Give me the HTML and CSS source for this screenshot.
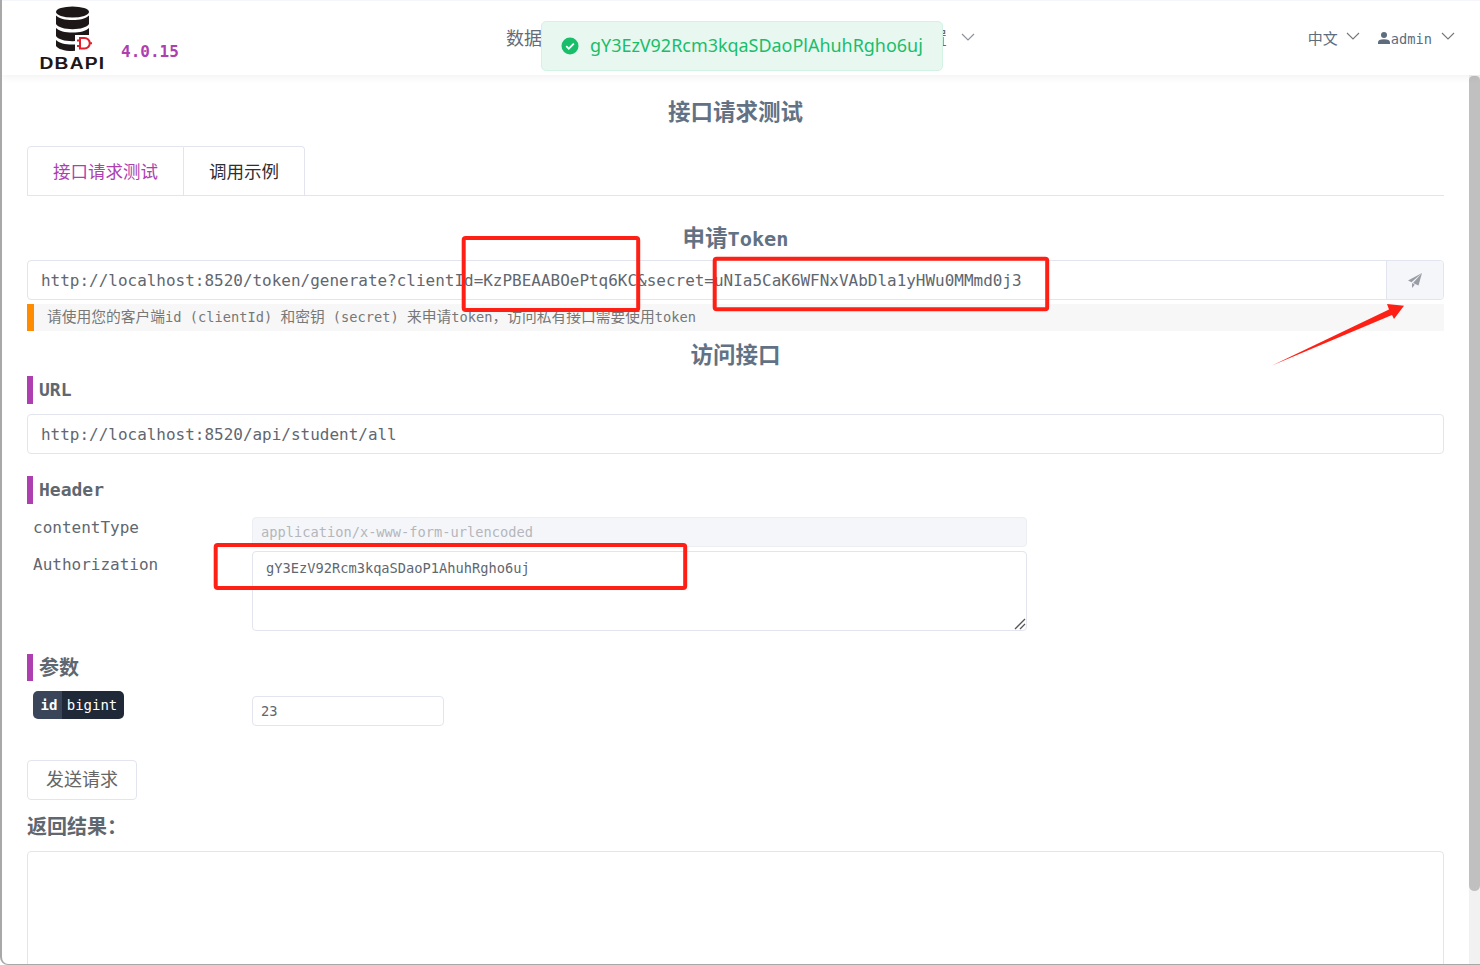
FILE: index.html
```html
<!DOCTYPE html>
<html lang="zh">
<head>
<meta charset="utf-8">
<title>DBAPI</title>
<link rel="stylesheet" href="styles.css">
</head>
<body>
<div class="window">
  <header class="topbar">
    <div class="logo">
      <svg class="logo-mark" width="38" height="46" viewBox="0 0 38 46">
        <ellipse cx="18.5" cy="6" rx="16.5" ry="5.5" fill="#1d1718"/>
        <path d="M2 9.5c3 3 9 4.6 16.5 4.6S32 12.500 35 9.500V18c-2 3.200-8.500 5.200-16.500 5.200S4 21.200 2 18z" fill="#1d1718"/>
        <path d="M2 22c3 3 9 4.600 16.500 4.600S32 25 35 22v8c-2 3.200-8.500 5.200-16.500 5.200S4 33.200 2 30z" fill="#1d1718"/>
        <path d="M2 34c3 3 9 4.600 16.500 4.600 2 0 4-.1 6-.4v6.300c-2 .3-4 .5-6 .5C10 45 4 43 2 40z" fill="#1d1718"/>
        <rect x="21" y="29" width="17" height="16" fill="#fff"/>
        <path d="M26 32h4.500a5.200 5.200 0 0 1 0 10.500H26zM23 34.500h3M23 40h3M35.500 37.200H38" fill="none" stroke="#e0202c" stroke-width="2"/>
      </svg>
      <span class="logo-text">DBAPI</span>
    </div>
    <span class="version">4.0.15</span>
    <nav class="nav">
      <span class="nav-item">数据源</span>
      <span class="nav-item">接口</span>
      <span class="nav-item">任务</span>
      <span class="nav-item">监控</span>
      <span class="nav-item">系统设置</span>
      <svg class="chev" width="14" height="8" viewBox="0 0 14 8"><path d="M1 1l6 6 6-6" fill="none" stroke="#8a8f98" stroke-width="1.100"/></svg>
    </nav>
    <div class="account">
      <span class="lang">中文</span>
      <svg class="chev" width="14" height="8" viewBox="0 0 14 8"><path d="M1 1l6 6 6-6" fill="none" stroke="#777" stroke-width="1.100"/></svg>
      <svg class="user-icon" width="12" height="12" viewBox="0 0 12 12"><circle cx="6" cy="3" r="3" fill="#5d6d7e"/><path d="M0 12V10.500C0 8.500 2 7.300 6 7.300s6 1.200 6 3.200V12z" fill="#5d6d7e"/></svg>
      <span class="user">admin</span>
      <svg class="chev" width="14" height="8" viewBox="0 0 14 8"><path d="M1 1l6 6 6-6" fill="none" stroke="#777" stroke-width="1.100"/></svg>
    </div>
  </header>

  <div class="body-row">
    <main class="content">
      <h1 class="title">接口请求测试</h1>
      <div class="tabs">
        <div class="tab tab-active">接口请求测试</div>
        <div class="tab">调用示例</div>
      </div>

      <h2 class="title title-token">申请<span class="title-latin">Token</span></h2>
      <div class="input-group">
        <div class="field-text">http://localhost:8520/token/generate?clientId=KzPBEAABOePtq6KC&amp;secret=uNIa5CaK6WFNxVAbDla1yHWu0MMmd0j3</div>
        <div class="addon">
          <svg width="14" height="15" viewBox="0 0 14 15"><path d="M14 0L0 7.500l3.500 1.700L14 0zM14 0L5 10l5.500 2.500zM4 10v5l2.800-3.300z" fill="#9a9ca6"/></svg>
        </div>
      </div>
      <div class="note"><span class="cjk">请使用您的客户端</span>id (clientId) <span class="cjk">和密钥</span> (secret) <span class="cjk">来申请</span>token<span class="cjk">，访问私有接口需要使用</span>token</div>

      <h2 class="title title-access">访问接口</h2>

      <h3 class="section-head head-url">URL</h3>
      <div class="input-full">http://localhost:8520/api/student/all</div>

      <h3 class="section-head head-header">Header</h3>
      <div class="form-row row-content-type">
        <label class="row-label">contentType</label>
        <div class="small-input small-disabled">application/x-www-form-urlencoded</div>
      </div>
      <div class="form-row row-auth">
        <label class="row-label label-auth">Authorization</label>
        <div class="auth-area">gY3EzV92Rcm3kqaSDaoP1AhuhRgho6uj
          <svg class="grip" width="12" height="12" viewBox="0 0 12 12"><path d="M1 11L11 1M6 11l5-5" stroke="#555" stroke-width="1.300" fill="none"/></svg>
        </div>
      </div>

      <h3 class="section-head head-param">参数</h3>
      <div class="form-row row-param">
        <div class="param-label"><span class="tag"><span class="tag-name">id</span><span class="tag-type">bigint</span></span></div>
        <div class="small-input param-input">23</div>
      </div>

      <button class="send-btn" type="button">发送请求</button>
      <div class="result-label">返回结果：</div>
      <div class="result-box"></div>
    </main>
    <div class="scrollbar"><div class="thumb"></div></div>
  </div>

  <div class="message">
    <svg class="message-icon" width="18" height="18" viewBox="0 0 18 18"><circle cx="9" cy="9" r="8.500" fill="#19be6b"/><path d="M5.200 9.200l2.600 2.500 5-5" fill="none" stroke="#fff" stroke-width="1.800"/></svg>
    <span class="message-text">gY3EzV92Rcm3kqaSDaoPlAhuhRgho6uj</span>
  </div>

  <svg class="annotations" width="1480" height="965" viewBox="0 0 1480 965">
    <rect x="463.700" y="238" width="174.500" height="72" rx="2"/>
    <rect x="714.700" y="258.700" width="332.500" height="50.500" rx="2"/>
    <rect x="215.700" y="545" width="469.500" height="43" rx="2"/>
    <path class="arrow" d="M1272 365.500L1389 309.500 1387 304 1404 305.700 1394 319 1392 315z"/>
  </svg>
</div>
</body>
</html>
```
FILE: styles.css
```css
* { box-sizing: border-box; }
html, body { margin: 0; padding: 0; height: 100%; overflow: hidden; background: #fff; }
body { font-family: "Noto Sans CJK SC", "DejaVu Sans", sans-serif; color: #5d6d7e; }

.window {
  position: relative;
  width: 1480px;
  height: 965px;
  overflow: hidden;
  display: flex;
  flex-direction: column;
  background: #fff;
  border-left: 2px solid #a8a8a8;
  border-bottom: 1px solid #a8a8a8;
  border-bottom-left-radius: 8px;
}

/* top bar */
.topbar {
  position: relative;
  z-index: 2;
  flex: 0 0 75px;
  display: flex;
  align-items: flex-start;
  background: #fff;
  border-top: 1px solid #f5f6fb;
  box-shadow: 0 2px 8px rgba(0, 0, 0, 0.06);
}
.logo { margin: 5px 0 0 37px; width: 66px; display: flex; flex-direction: column; align-items: center; }
.logo-mark { display: block; margin-left: 2px; overflow: visible; }
.logo-text {
  font-family: "Liberation Sans", sans-serif;
  font-weight: 700;
  font-size: 16px;
  line-height: 14px;
  letter-spacing: 1px;
  color: #1d1718;
  margin-top: 5px;
  transform: scaleX(1.2);
}
.version {
  margin: 41px 0 0 16px;
  width: 58px;
  font-family: "DejaVu Sans Mono", monospace;
  font-weight: 700;
  font-size: 16px;
  line-height: 20px;
  color: #ad3fb1;
}
.nav { margin: 24px 0 0 327px; display: flex; align-items: center; width: 470px; height: 24px; font-size: 18px; color: #666c75; }
.nav-item { margin-right: 51.750px; white-space: nowrap; }
.nav-item:last-of-type { margin-right: 0; }
.nav .chev { margin-left: 14px; }
.account { margin: 28px 0 0 auto; padding-right: 25px; display: flex; align-items: flex-start; color: #5d6d7e; }
.lang { font-size: 15px; line-height: 18px; }
.account .chev { margin: 3px 0 0 8px; }
.user-icon { margin: 3px 1px 0 18px; }
.user { margin-right: 1px; font-family: "DejaVu Sans Mono", monospace; font-size: 13.700px; line-height: 20px; }

/* layout */
.body-row { flex: 1; min-height: 0; display: flex; }
.content { flex: 1; min-width: 0; padding: 20px 25px 0; overflow: hidden; }
.scrollbar { flex: 0 0 11px; background: #f1f1f1; }
.thumb { height: 815px; margin-top: 1px; background: #c0c0c0; border-radius: 6px 6px 8px 8px; }

.title { margin: 0; height: 34px; line-height: 30px; text-align: center; font-size: 22.500px; font-weight: 700; color: #627284; }
.title-token { margin-top: 25px; line-height: 30px; }
.title-latin { font-family: "DejaVu Sans Mono", monospace; font-size: 20.300px; }
.title-access { margin-top: 7px; }

/* tabs */
.tabs { margin-top: 17px; height: 50px; display: flex; border-bottom: 1px solid #e3e5ee; }
.tab {
  height: 50px;
  padding: 0 25px;
  font-size: 17.500px;
  line-height: 48px;
  color: #2e2e33;
  background: #fff;
  border: 1px solid #e3e5ee;
  border-left: 0;
  border-top-right-radius: 4px;
}
.tab-active {
  color: #ad3fb1;
  width: 157px;
  border-left: 1px solid #e3e5ee;
  border-top-left-radius: 4px;
  border-top-right-radius: 0;
}

/* inputs */
.input-group { margin-top: 5px; height: 40px; display: flex; border: 1px solid #e3e5ee; border-radius: 4px; }
.field-text, .input-full {
  font-family: "DejaVu Sans Mono", "Noto Sans CJK SC", monospace;
  font-size: 15.970px;
  line-height: 40px;
  color: #5f6770;
  padding-left: 13px;
  white-space: nowrap;
}
.field-text { flex: 1; min-width: 0; }
.addon {
  flex: 0 0 57px;
  display: flex;
  align-items: center;
  justify-content: center;
  background: #f5f6fa;
  border-left: 1px solid #e3e5ee;
  border-radius: 0 3px 3px 0;
}
.note {
  margin-top: 4px;
  height: 27px;
  padding-left: 13px;
  font-family: "DejaVu Sans Mono", "Noto Sans CJK SC", monospace;
  font-size: 13.700px;
  line-height: 26px;
  color: #777;
  background: #f7f7f7;
  border-left: 7px solid #ff8c00;
  white-space: nowrap;
}
.cjk { font-size: 14.750px; }
.input-full { margin-top: 10px; height: 40px; border: 1px solid #e3e5ee; border-radius: 4px; }

.section-head {
  margin: 0;
  height: 28px;
  padding-left: 6px;
  border-left: 6px solid #ad3fb1;
  font-family: "DejaVu Sans Mono", "Noto Sans CJK SC", monospace;
  font-size: 18px;
  line-height: 28px;
  font-weight: 700;
  color: #5f6770;
}
.head-url { margin-top: 4px; }
.head-header { margin-top: 22px; }
.head-param { margin-top: 23px; height: 27px; font-size: 20px; line-height: 28px; }

.form-row { display: flex; align-items: flex-start; }
.row-label {
  flex: 0 0 225px;
  padding-left: 6px;
  font-family: "DejaVu Sans Mono", monospace;
  font-size: 16px;
  line-height: 22px;
  color: #5f6770;
}
.label-auth { line-height: 28px; }
.row-content-type { margin-top: 13px; }
.row-auth { margin-top: 4px; }
.small-input {
  height: 30px;
  padding-left: 8px;
  border: 1px solid #e3e5ee;
  border-radius: 4px;
  font-family: "DejaVu Sans Mono", monospace;
  font-size: 13.700px;
  line-height: 29px;
  color: #5f6770;
}
.small-disabled { width: 775px; background: #f5f6fa; border-color: #eceef4; color: #b4b6bb; line-height: 28px; }
.auth-area {
  position: relative;
  width: 775px;
  height: 80px;
  padding: 6px 13px;
  border: 1px solid #e3e5ee;
  border-radius: 4px;
  font-family: "DejaVu Sans Mono", monospace;
  font-size: 13.700px;
  line-height: 21px;
  color: #5f6770;
}
.grip { position: absolute; right: 0; bottom: 0; }

.row-param { margin-top: 10px; height: 35px; }
.param-label { flex: 0 0 225px; padding-left: 6px; }
.tag {
  display: inline-flex;
  height: 28px;
  border-radius: 5px;
  overflow: hidden;
  font-family: "DejaVu Sans Mono", monospace;
  font-size: 14px;
  line-height: 28px;
  color: #fff;
}
.tag-name { width: 29px; padding-left: 3px; text-align: center; font-weight: 700; background: #3a4559; }
.tag-type { width: 62px; padding-right: 2px; text-align: center; font-weight: 500; background: #1f2937; }
.param-input { margin-top: 5px; width: 192px; }

.send-btn {
  display: block;
  margin: 34px 0 0;
  width: 110px;
  height: 40px;
  padding: 0 0 5px;
  background: #fff;
  border: 1px solid #e3e5ee;
  border-radius: 4px;
  font-family: "Noto Sans CJK SC", sans-serif;
  font-size: 18px;
  color: #666;
}
.result-label { margin-top: 11px; height: 30px; line-height: 30px; font-size: 20px; font-weight: 700; color: #5f6770; }
.result-box { margin-top: 10px; height: 300px; border: 1px solid #e3e5ee; border-radius: 4px; }

/* overlays */
.message {
  position: absolute;
  left: 539px;
  top: 21px;
  z-index: 5;
  width: 402px;
  height: 50px;
  display: flex;
  align-items: center;
  gap: 11px;
  padding-left: 19px;
  background: #e8f7f0;
  border: 1px solid #d2f2e3;
  border-radius: 5px;
  font-family: "Noto Sans", sans-serif;
  font-size: 17.950px;
  color: #19be6b;
}
.message-icon { flex: 0 0 18px; }
.message-text { margin-top: -3px; white-space: nowrap; }
.annotations { position: absolute; left: -2px; top: 0; z-index: 6; pointer-events: none; }
.annotations rect { fill: none; stroke: #ff2015; stroke-width: 4px; }
.annotations .arrow { fill: #ff2015; }
```
